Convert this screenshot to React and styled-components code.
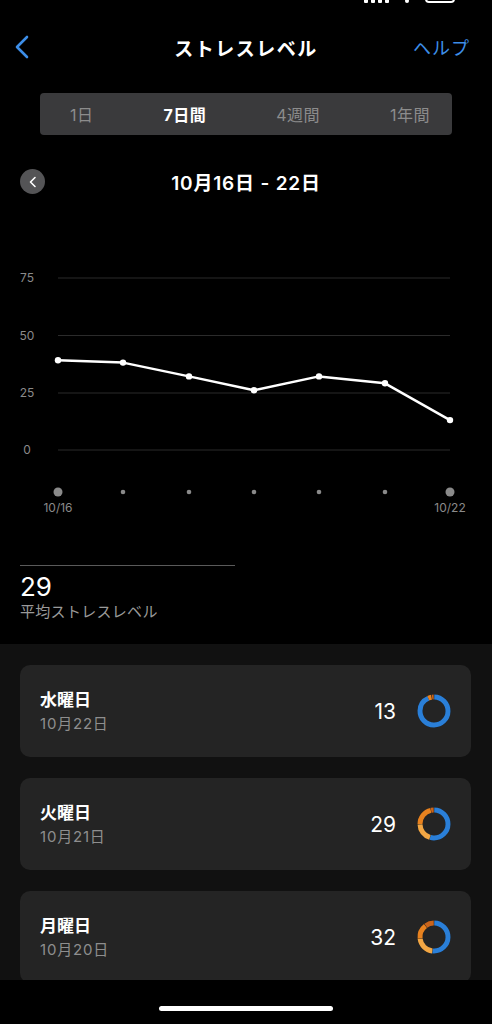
import React from 'react';
import styled, { createGlobalStyle } from 'styled-components';

const GlobalStyle = createGlobalStyle`
  html, body {
    margin: 0;
    padding: 0;
    background: #000;
  }
  body {
    font-family: Inter, "Noto Sans CJK JP", sans-serif;
    color: #fff;
  }
`;

const Screen = styled.div`
  position: relative;
  width: 492px;
  height: 1024px;
  background: #000;
  overflow: hidden;
`;

const StatusBar = styled.div`
  height: 10px;
  overflow: hidden;
  display: flex;
  justify-content: space-between;
  align-items: flex-end;
  padding: 0 37px 0 60px;
`;

const Clock = styled.div`
  font-size: 18px;
  font-weight: 700;
  line-height: 18px;
  margin-bottom: 7px;
`;

const StatusIcons = styled.div`
  display: flex;
  align-items: flex-end;
  gap: 16px;
  margin-bottom: 7px;
`;

const SignalBars = styled.div`
  display: flex;
  align-items: flex-end;
  gap: 3px;
`;

const Bar = styled.div`
  width: 4px;
  height: ${(p) => p.$h}px;
  background: #fff;
  border-radius: 1px;
`;

const Wifi = styled.div`
  width: 4px;
  height: 4px;
  border-radius: 50%;
  background: #fff;
`;

const Battery = styled.div`
  width: 30px;
  height: 14px;
  border: 2px solid #fff;
  border-radius: 4px;
  box-sizing: border-box;
`;

const NavBar = styled.div`
  height: 74px;
  display: grid;
  grid-template-columns: 1fr auto 1fr;
  align-items: center;
  padding: 0 22px 0 14px;
`;

const BackLink = styled.div`
  display: flex;
  align-items: center;
`;

const NavTitle = styled.div`
  font-size: 19px;
  font-weight: 700;
  letter-spacing: 1.5px;
  padding-left: 8px;
`;

const HelpLink = styled.div`
  justify-self: end;
  font-size: 18px;
  color: #3d8ee8;
  letter-spacing: 1px;
`;

const Segments = styled.div`
  margin: 9px 40px 0;
  height: 42px;
  background: #3a3a3c;
  border-radius: 4px;
  display: flex;
  align-items: center;
  justify-content: space-between;
  padding: 0 22px 0 30px;
`;

const Segment = styled.div`
  font-size: 16px;
  color: ${(p) => (p.$active ? '#fff' : '#8c8c8c')};
  font-weight: ${(p) => (p.$active ? 700 : 400)};
  letter-spacing: 0.5px;
`;

const DateRow = styled.div`
  margin-top: 33px;
  height: 25px;
  display: grid;
  grid-template-columns: 1fr auto 1fr;
  align-items: center;
  padding: 0 20px;
`;

const RoundButton = styled.div`
  width: 25px;
  height: 25px;
  border-radius: 50%;
  background: #545456;
  display: flex;
  align-items: center;
  justify-content: center;
`;

const DateTitle = styled.div`
  font-size: 19px;
  font-weight: 600;
  letter-spacing: 0.8px;
`;

const ChartSvg = styled.svg`
  display: block;
  margin-top: 67px;
`;

const Summary = styled.div`
  padding: 45px 20px 22px;
`;

const Divider = styled.div`
  width: 215px;
  height: 1px;
  background: #5a5a5a;
`;

const AvgValue = styled.div`
  margin-top: 6px;
  font-size: 26px;
  line-height: 30px;
  font-weight: 400;
`;

const AvgLabel = styled.div`
  font-size: 15px;
  line-height: 20px;
  color: #9a9a9a;
  letter-spacing: 0.3px;
`;

const List = styled.div`
  background: #111;
  padding: 21px 21px 40px 20px;
  display: flex;
  flex-direction: column;
  gap: 21px;
`;

const Card = styled.div`
  background: #242424;
  border-radius: 10px;
  height: 92px;
  box-sizing: border-box;
  padding: 0 19px 0 20px;
  display: flex;
  align-items: center;
  justify-content: space-between;
`;

const DayInfo = styled.div`
  display: flex;
  flex-direction: column;
`;

const DayName = styled.div`
  font-size: 17px;
  line-height: 22px;
  font-weight: 700;
`;

const DayDate = styled.div`
  margin-top: 3px;
  font-size: 15px;
  line-height: 20px;
  color: #8e8e8e;
  letter-spacing: 0.8px;
`;

const DayScore = styled.div`
  display: flex;
  align-items: center;
  gap: 20px;
`;

const ScoreValue = styled.div`
  font-size: 21px;
`;

const HomeArea = styled.div`
  position: absolute;
  left: 0;
  right: 0;
  bottom: 0;
  height: 44px;
  background: #000;
  display: flex;
  justify-content: center;
  padding-top: 26px;
  box-sizing: border-box;
`;

const HomeIndicator = styled.div`
  width: 174px;
  height: 5px;
  border-radius: 3px;
  background: #fff;
`;

const values = [39, 38, 32, 26, 32, 29, 13];
const xs = [58, 123, 189, 254, 319, 385, 450];
const yOf = (v) => 190 - v * 2.3;

const StressChart = () => {
  const grid = [
    { label: '75', y: 18 },
    { label: '50', y: 75.5 },
    { label: '25', y: 133 },
    { label: '0', y: 190 },
  ];
  const points = values.map((v, i) => `${xs[i]},${yOf(v)}`).join(' ');
  return (
    <ChartSvg width="492" height="260" viewBox="0 0 492 260">
      {grid.map((g) => (
        <g key={g.label}>
          <line x1="58" x2="450" y1={g.y} y2={g.y} stroke="#2b2b2b" strokeWidth="1" />
          <text x="27" y={g.y + 4} fill="#8a8a8a" fontSize="12" textAnchor="middle" fontFamily="Inter, sans-serif">
            {g.label}
          </text>
        </g>
      ))}
      <polyline points={points} fill="none" stroke="#fff" strokeWidth="2.5" strokeLinejoin="round" />
      {values.map((v, i) => (
        <circle key={i} cx={xs[i]} cy={yOf(v)} r="3.2" fill="#fff" />
      ))}
      {xs.map((x, i) => (
        <circle key={x} cx={x} cy="232" r={i === 0 || i === xs.length - 1 ? 4.5 : 2.3} fill="#8a8a8a" />
      ))}
      <text x="58" y="252" fill="#8a8a8a" fontSize="12" textAnchor="middle" fontFamily="Inter, sans-serif">10/16</text>
      <text x="450" y="252" fill="#8a8a8a" fontSize="12" textAnchor="middle" fontFamily="Inter, sans-serif">10/22</text>
    </ChartSvg>
  );
};

const Donut = ({ segments }) => {
  const r = 14;
  const c = 2 * Math.PI * r;
  return (
    <svg width="36" height="36" viewBox="0 0 36 36">
      <circle cx="18" cy="18" r={r} fill="none" stroke="#1a1a1a" strokeWidth="5" />
      {segments.map((s, i) => {
        const len = ((s.end - s.start) / 360) * c;
        return (
          <circle
            key={i}
            cx="18"
            cy="18"
            r={r}
            fill="none"
            stroke={s.color}
            strokeWidth="5"
            strokeDasharray={`${len} ${c}`}
            transform={`rotate(${s.start - 90} 18 18)`}
          />
        );
      })}
    </svg>
  );
};

const BLUE = '#2a7fd8';
const LIGHT = '#f3a744';
const ORANGE = '#e8821f';
const DARK = '#c9641c';

const days = [
  {
    name: '水曜日',
    date: '10月22日',
    score: 13,
    segments: [
      { color: BLUE, start: 1, end: 334 },
      { color: ORANGE, start: 336, end: 350 },
      { color: DARK, start: 352, end: 359 },
    ],
  },
  {
    name: '火曜日',
    date: '10月21日',
    score: 29,
    segments: [
      { color: BLUE, start: 1, end: 195 },
      { color: LIGHT, start: 197, end: 268 },
      { color: ORANGE, start: 270, end: 346 },
      { color: DARK, start: 348, end: 359 },
    ],
  },
  {
    name: '月曜日',
    date: '10月20日',
    score: 32,
    segments: [
      { color: BLUE, start: 1, end: 185 },
      { color: LIGHT, start: 187, end: 262 },
      { color: ORANGE, start: 264, end: 322 },
      { color: DARK, start: 324, end: 359 },
    ],
  },
];

const App = () => {
  return (
    <Screen>
      <GlobalStyle />
      <StatusBar>
        <Clock>9:41</Clock>
        <StatusIcons>
          <SignalBars>
            <Bar $h={6} />
            <Bar $h={9} />
            <Bar $h={12} />
            <Bar $h={14} />
          </SignalBars>
          <Wifi />
          <Battery />
        </StatusIcons>
      </StatusBar>
      <NavBar>
        <BackLink>
          <svg width="18" height="24" viewBox="0 0 18 24">
            <path d="M13 2 L3 12 L13 22" fill="none" stroke="#3d8ee8" strokeWidth="2.6" strokeLinecap="round" strokeLinejoin="round" />
          </svg>
        </BackLink>
        <NavTitle>ストレスレベル</NavTitle>
        <HelpLink>ヘルプ</HelpLink>
      </NavBar>
      <Segments>
        <Segment>1日</Segment>
        <Segment $active>7日間</Segment>
        <Segment>4週間</Segment>
        <Segment>1年間</Segment>
      </Segments>
      <DateRow>
        <RoundButton>
          <svg width="10" height="12" viewBox="0 0 10 12">
            <path d="M7 1.5 L2.5 6 L7 10.5" fill="none" stroke="#fff" strokeWidth="1.6" strokeLinecap="round" strokeLinejoin="round" />
          </svg>
        </RoundButton>
        <DateTitle>10月16日 - 22日</DateTitle>
        <div />
      </DateRow>
      <StressChart />
      <Summary>
        <Divider />
        <AvgValue>29</AvgValue>
        <AvgLabel>平均ストレスレベル</AvgLabel>
      </Summary>
      <List>
        {days.map((d) => (
          <Card key={d.name}>
            <DayInfo>
              <DayName>{d.name}</DayName>
              <DayDate>{d.date}</DayDate>
            </DayInfo>
            <DayScore>
              <ScoreValue>{d.score}</ScoreValue>
              <Donut segments={d.segments} />
            </DayScore>
          </Card>
        ))}
      </List>
      <HomeArea>
        <HomeIndicator />
      </HomeArea>
    </Screen>
  );
};

export default App;
